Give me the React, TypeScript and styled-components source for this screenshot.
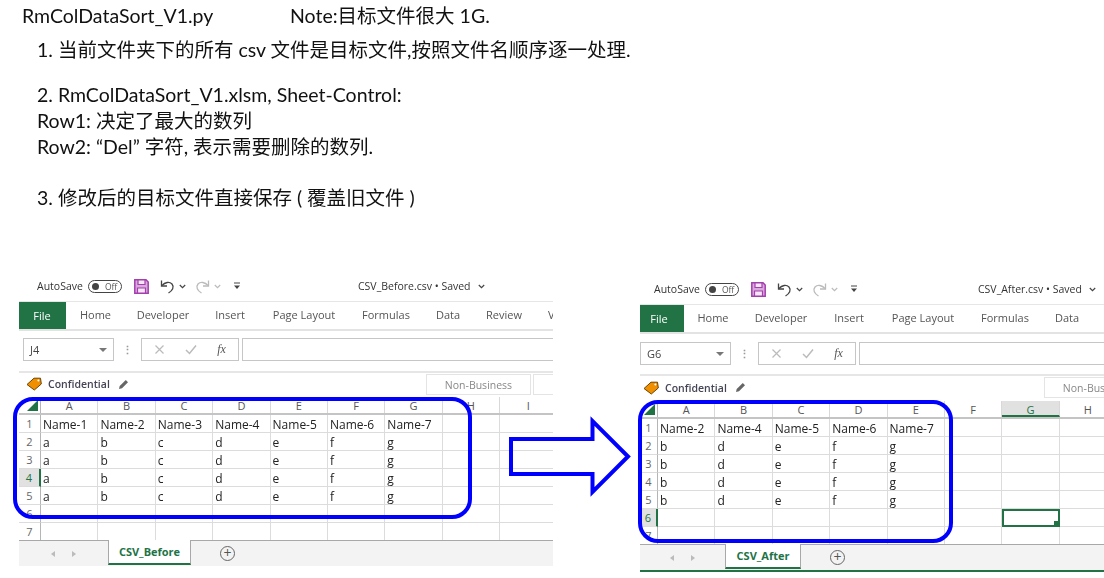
import styled, { createGlobalStyle } from 'styled-components';

const GlobalStyle = createGlobalStyle`
  html, body {
    margin: 0;
    padding: 0;
    background: #fff;
    overflow: hidden;
  }
`;

const GREEN = '#217346';
const BLUE = '#0000ff';
const ROW_H = 18;
const COL_W = 57.4;

const Page = styled.div`
  position: relative;
  width: 1104px;
  height: 578px;
  overflow: hidden;
  background: #fff;
  color: #1a1a1a;
`;

const Notes = styled.div`
  height: 278px;
  padding: 5px 0 0 22px;
  box-sizing: border-box;
  font-family: Lato, 'Noto Sans CJK SC', sans-serif;
  font-size: 19.5px;
  color: #111;
  filter: blur(0.3px);
`;

const TitleRow = styled.div`
  display: flex;
  height: 22px;
  line-height: 22px;
`;

const TitleFile = styled.span`
  width: 268px;
`;

const NoteList = styled.div`
  padding: 10px 0 0 15px;
`;

const NoteBlock = styled.div<{ $gap: number }>`
  margin-bottom: ${(p) => p.$gap}px;
  line-height: 26px;
`;

const Windows = styled.div`
  display: flex;
  align-items: flex-start;
  padding-left: 19px;
  gap: 87px;
`;

const Sheet = styled.div<{ $width: number; $top: number }>`
  width: ${(p) => p.$width}px;
  margin-top: ${(p) => p.$top}px;
  flex: none;
  font-family: 'Open Sans', 'Noto Sans', sans-serif;
  font-size: 11px;
  color: #444;
  filter: blur(0.3px);
`;

const QuickBar = styled.div<{ $pad: number }>`
  height: 24px;
  display: flex;
  align-items: center;
  padding: 0 0 7px ${(p) => p.$pad}px;
  font-size: 10.5px;
  border-bottom: 1px solid #e6e6e6;
  box-sizing: border-box;
  white-space: nowrap;
`;

const QuickLabel = styled.span`
  width: 51px;
  flex: none;
  color: #333;
`;

const Toggle = styled.span`
  width: 34px;
  height: 13px;
  border: 1px solid #444;
  border-radius: 8px;
  display: flex;
  align-items: center;
  padding-left: 3px;
  gap: 6px;
  font-size: 8.5px;
  color: #555;
  flex: none;
  box-sizing: border-box;
  &::before {
    content: '';
    width: 7px;
    height: 7px;
    border-radius: 50%;
    background: #444;
  }
`;

const IconSlot = styled.span<{ $left: number }>`
  display: flex;
  flex: none;
  margin-left: ${(p) => p.$left}px;
`;

const DocTitle = styled.span<{ $left: number }>`
  margin-left: ${(p) => p.$left}px;
  white-space: nowrap;
  font-size: 10.5px;
  color: #333;
  display: flex;
  align-items: center;
  gap: 7px;
`;

const TabsBar = styled.div`
  height: 27px;
  display: flex;
  align-items: center;
  overflow: hidden;
  border-bottom: 2px solid #e3e3e3;
  box-sizing: content-box;
  font-size: 11px;
`;

const FileTab = styled.span<{ $width: number; $inset: number }>`
  width: ${(p) => p.$width}px;
  height: 27px;
  padding-right: ${(p) => p.$inset}px;
  box-sizing: border-box;
  background: ${GREEN};
  color: #fff;
  display: flex;
  align-items: center;
  justify-content: center;
  flex: none;
`;

const RibbonTab = styled.span<{ $width: number }>`
  width: ${(p) => p.$width}px;
  flex: none;
  margin-bottom: 2px;
  text-align: center;
  color: #555;
  white-space: nowrap;
`;

const FormulaBar = styled.div<{ $pad: number; $lift: number }>`
  height: 42px;
  display: flex;
  align-items: center;
  padding: 0 0 ${(p) => p.$lift}px ${(p) => p.$pad}px;
  border-bottom: 2px solid #e6e6e6;
  box-sizing: border-box;
`;

const NameBox = styled.div`
  width: 91px;
  height: 23px;
  border: 1px solid #c6c6c6;
  box-sizing: border-box;
  display: flex;
  align-items: center;
  justify-content: space-between;
  padding: 0 6px;
  font-size: 11px;
  color: #444;
  flex: none;
`;

const Caret = styled.span`
  width: 0;
  height: 0;
  border-left: 4px solid transparent;
  border-right: 4px solid transparent;
  border-top: 4px solid #777;
`;

const Dots = styled.span`
  width: 27px;
  flex: none;
  text-align: center;
  color: #999;
  font-size: 11px;
  font-weight: 700;
`;

const FormulaTools = styled.div`
  width: 98px;
  height: 23px;
  border: 1px solid #c6c6c6;
  box-sizing: border-box;
  display: flex;
  align-items: center;
  justify-content: space-around;
  padding: 0 2px;
  flex: none;
  color: #bbb;
`;

const FxLabel = styled.span`
  font-family: 'Liberation Serif', serif;
  font-style: italic;
  font-size: 12px;
  color: #555;
`;

const FormulaInput = styled.div`
  flex: 1;
  height: 23px;
  margin-left: 3px;
  border: 1px solid #c6c6c6;
  border-right: 0;
  box-sizing: border-box;
`;

const LabelRow = styled.div<{ $height: number; $pad: number }>`
  height: ${(p) => p.$height}px;
  display: flex;
  align-items: center;
  padding: 0 0 2px ${(p) => p.$pad}px;
  box-sizing: border-box;
  position: relative;
  overflow: hidden;
`;

const LabelText = styled.span`
  font-weight: 600;
  font-size: 10.5px;
  color: #445;
  margin-left: 6px;
  margin-right: 8px;
`;

const SensitivityTab = styled.span<{ $left: number; $width: number }>`
  position: absolute;
  left: ${(p) => p.$left}px;
  top: 1px;
  width: ${(p) => p.$width}px;
  height: 21px;
  border: 1px solid #e4e4e4;
  box-sizing: border-box;
  display: flex;
  align-items: center;
  justify-content: center;
  font-size: 10.5px;
  color: #888;
  white-space: nowrap;
`;

const GridArea = styled.div`
  position: relative;
`;

const GridRow = styled.div`
  display: flex;
  height: ${ROW_H}px;
  overflow: hidden;
`;

const HeaderRow = styled(GridRow)`
  border-bottom: 2px solid #c4c4c4;
  box-sizing: border-box;
`;

const RowHead = styled.div<{ $active?: boolean; $width: number }>`
  width: ${(p) => p.$width}px;
  flex: none;
  box-sizing: border-box;
  display: flex;
  align-items: center;
  justify-content: center;
  font-size: 11px;
  color: ${(p) => (p.$active ? GREEN : '#666')};
  background: ${(p) => (p.$active ? '#e1e1e1' : '#fff')};
  border-right: ${(p) => (p.$active ? `2px solid ${GREEN}` : '1px solid #b5b5b5')};
  border-bottom: 1px solid #dcdcdc;
`;

const Corner = styled.div<{ $width: number }>`
  width: ${(p) => p.$width}px;
  flex: none;
  box-sizing: border-box;
  border-right: 1px solid #b5b5b5;
  position: relative;
  &::after {
    content: '';
    position: absolute;
    right: 2px;
    bottom: 2px;
    border-style: solid;
    border-width: 0 0 11px 11px;
    border-color: transparent transparent ${GREEN} transparent;
  }
`;

const ColHead = styled.div<{ $active?: boolean }>`
  width: ${COL_W}px;
  flex: none;
  box-sizing: border-box;
  text-align: center;
  line-height: 18px;
  font-size: 11px;
  color: ${(p) => (p.$active ? GREEN : '#555')};
  background: ${(p) => (p.$active ? '#e1e1e1' : '#fff')};
  border-right: 1px solid #d8d8d8;
  border-bottom: ${(p) => (p.$active ? `2px solid ${GREEN}` : 'none')};
`;

const Cell = styled.div<{ $selected?: boolean }>`
  width: ${COL_W}px;
  flex: none;
  box-sizing: border-box;
  padding-left: 2px;
  line-height: 20px;
  font-size: 12px;
  color: #222;
  white-space: nowrap;
  border-right: 1px solid #dcdcdc;
  border-bottom: 1px solid #dcdcdc;
  position: relative;
  ${(p) => p.$selected && `outline: 2px solid ${GREEN}; outline-offset: -2px;`}
`;

const Handle = styled.span`
  position: absolute;
  right: 0;
  bottom: 0;
  width: 5px;
  height: 5px;
  background: ${GREEN};
`;

const SheetBar = styled.div`
  height: 25px;
  margin-top: -1px;
  display: flex;
  background: #f3f3f3;
  border-top: 1px solid #a8a8a8;
  box-sizing: content-box;
  position: relative;
`;

const Arrows = styled.span<{ $width: number }>`
  width: ${(p) => p.$width}px;
  flex: none;
  display: flex;
  align-items: center;
  justify-content: center;
  gap: 17px;
  &::before,
  &::after {
    content: '';
    border-style: solid;
    border-width: 3px 4px;
    border-color: transparent #bbb transparent transparent;
    margin-left: -4px;
  }
  &::after {
    border-color: transparent transparent transparent #bbb;
    margin-left: 0;
    margin-right: -4px;
  }
`;

const SheetTab = styled.span<{ $width: number }>`
  width: ${(p) => p.$width}px;
  height: 25px;
  margin-top: -1px;
  flex: none;
  background: #fff;
  border-left: 1px solid #a8a8a8;
  border-right: 1px solid #a8a8a8;
  border-bottom: 2px solid ${GREEN};
  box-sizing: border-box;
  text-align: center;
  line-height: 24px;
  font-weight: 700;
  font-size: 11px;
  color: ${GREEN};
`;

const AddSheet = styled.span`
  width: 15px;
  height: 15px;
  margin: 5px 0 0 29px;
  flex: none;
  border: 1px solid #666;
  border-radius: 50%;
  box-sizing: border-box;
  color: #555;
  font-size: 14px;
  line-height: 12px;
  text-align: center;
`;

const StatusLine = styled.div`
  height: 2px;
  background: ${GREEN};
`;

const BlueFrame = styled.div<{ $left: number; $top: number; $width: number; $height: number }>`
  position: absolute;
  left: ${(p) => p.$left}px;
  top: ${(p) => p.$top}px;
  width: ${(p) => p.$width}px;
  height: ${(p) => p.$height}px;
  border: 4px solid ${BLUE};
  border-radius: 20px;
  box-sizing: border-box;
  pointer-events: none;
`;

const ArrowOverlay = styled.svg`
  position: absolute;
  left: 500px;
  top: 405px;
`;

function SaveIcon() {
  return (
    <svg width="15" height="15" viewBox="0 0 15 15" fill="none">
      <path d="M.8.8h11.2l2.2 2.2v11.2H.8z" fill="#d9a8dd" stroke="#a43fae" strokeWidth="1.5" />
      <path d="M4 1h7v4.5H4zM3.5 9h8v5h-8z" fill="#f4e6f5" stroke="#a43fae" strokeWidth="1.2" />
    </svg>
  );
}

function UndoIcon({ color, flip }: { color: string; flip?: boolean }) {
  return (
    <svg width="15" height="15" viewBox="0 0 15 15" fill="none" style={flip ? { transform: 'scaleX(-1)' } : undefined}>
      <path d="M1.5 1.5v5.5h5.5" stroke={color} strokeWidth="1.3" />
      <path d="M2 6.5C5 3 9.5 2.5 12 5c2.5 3 .5 6.5-3.5 9" stroke={color} strokeWidth="1.3" />
    </svg>
  );
}

function Chevron({ color = '#444' }: { color?: string }) {
  return (
    <svg width="7" height="5" viewBox="0 0 7 5" fill="none">
      <path d="M.8 1l2.7 2.7L6.2 1" stroke={color} strokeWidth="1.2" />
    </svg>
  );
}

function CustomizeIcon() {
  return (
    <svg width="8" height="8" viewBox="0 0 8 8" fill="none">
      <path d="M1 1h6" stroke="#444" />
      <path d="M1 3.5l3 3.5 3-3.5z" fill="#444" />
    </svg>
  );
}

function LabelIcon() {
  return (
    <svg width="16" height="14" viewBox="0 0 16 14">
      <path d="M1 7.5L8 1.2h6.5l.8 5.8-7 6z" fill="#f09000" stroke="#6b4300" strokeWidth="1" />
      <circle cx="12.4" cy="3.6" r="1" fill="#fff" />
    </svg>
  );
}

function PencilIcon() {
  return (
    <svg width="11" height="11" viewBox="0 0 11 11">
      <path d="M1 10l.7-3L7.8 1l2.2 2.2L4 9.3z" fill="#666" />
    </svg>
  );
}

function CrossIcon() {
  return (
    <svg width="11" height="11" viewBox="0 0 11 11" fill="none">
      <path d="M1.5 1.5l8 8M9.5 1.5l-8 8" stroke="#bbb" strokeWidth="1.2" />
    </svg>
  );
}

function CheckIcon() {
  return (
    <svg width="12" height="11" viewBox="0 0 12 11" fill="none">
      <path d="M1 6l3.5 3.5L11 1.5" stroke="#bbb" strokeWidth="1.5" />
    </svg>
  );
}

type Book = {
  width: number;
  top: number;
  rowHead: number;
  quickPad: number;
  barPad: number;
  barLift: number;
  labelPad: number;
  labelHeight: number;
  fileWidth: number;
  fileInset: number;
  titleLeft: number;
  fileName: string;
  cellRef: string;
  tabs: [string, number][];
  columns: string[];
  rows: string[][];
  activeRow: number;
  activeCol?: string;
  selected?: [number, number];
  tabName: string;
  tabWidth: number;
  arrowsWidth: number;
  nonBusinessLeft: number;
  frame: { left: number; top: number; width: number; height: number };
  status?: boolean;
};

const beforeNames = ['Name-1', 'Name-2', 'Name-3', 'Name-4', 'Name-5', 'Name-6', 'Name-7'];
const afterNames = ['Name-2', 'Name-4', 'Name-5', 'Name-6', 'Name-7'];
const repeat = (row: string[]) => [row, row, row, row];

const before: Book = {
  width: 534,
  top: 0,
  rowHead: 22,
  quickPad: 18,
  barPad: 4,
  barLift: 3,
  labelPad: 7,
  labelHeight: 24,
  fileWidth: 47,
  fileInset: 1,
  titleLeft: 117,
  fileName: 'CSV_Before.csv',
  cellRef: 'J4',
  tabs: [['Home', 59], ['Developer', 76], ['Insert', 58], ['Page Layout', 90], ['Formulas', 74], ['Data', 50], ['Review', 62], ['View', 50]],
  columns: ['A', 'B', 'C', 'D', 'E', 'F', 'G', 'H', 'I'],
  rows: [beforeNames, ...repeat(['a', 'b', 'c', 'd', 'e', 'f', 'g'])],
  activeRow: 4,
  tabName: 'CSV_Before',
  tabWidth: 83,
  arrowsWidth: 89,
  nonBusinessLeft: 407,
  frame: { left: -6, top: 0, width: 459, height: 122 },
};

const after: Book = {
  width: 464,
  top: 3,
  rowHead: 18,
  quickPad: 14,
  barPad: 0,
  barLift: 1,
  labelPad: 3,
  labelHeight: 25,
  fileWidth: 44,
  fileInset: 6,
  titleLeft: 120,
  fileName: 'CSV_After.csv',
  cellRef: 'G6',
  tabs: [['Home', 58], ['Developer', 78], ['Insert', 58], ['Page Layout', 90], ['Formulas', 74], ['Data', 50]],
  columns: ['A', 'B', 'C', 'D', 'E', 'F', 'G', 'H'],
  rows: [afterNames, ...repeat(['b', 'd', 'e', 'f', 'g'])],
  activeRow: 6,
  activeCol: 'G',
  selected: [6, 6],
  tabName: 'CSV_After',
  tabWidth: 76,
  arrowsWidth: 85,
  nonBusinessLeft: 404,
  frame: { left: -2, top: -1, width: 315, height: 143 },
  status: true,
};

function Workbook({ book }: { book: Book }) {
  const rowCount = 7;
  const colCount = book.columns.length;
  return (
    <Sheet $width={book.width} $top={book.top}>
      <QuickBar $pad={book.quickPad}>
        <QuickLabel>AutoSave</QuickLabel>
        <Toggle>Off</Toggle>
        <IconSlot $left={12}><SaveIcon /></IconSlot>
        <IconSlot $left={11}><UndoIcon color="#444" /></IconSlot>
        <IconSlot $left={4}><Chevron /></IconSlot>
        <IconSlot $left={9}><UndoIcon color="#bbb" flip /></IconSlot>
        <IconSlot $left={4}><Chevron color="#bbb" /></IconSlot>
        <IconSlot $left={12}><CustomizeIcon /></IconSlot>
        <DocTitle $left={book.titleLeft}>
          {book.fileName} • Saved <Chevron />
        </DocTitle>
      </QuickBar>
      <TabsBar>
        <FileTab $width={book.fileWidth} $inset={book.fileInset}>File</FileTab>
        {book.tabs.map(([name, width]) => (
          <RibbonTab key={name} $width={width}>{name}</RibbonTab>
        ))}
      </TabsBar>
      <FormulaBar $pad={book.barPad} $lift={book.barLift}>
        <NameBox>
          {book.cellRef}
          <Caret />
        </NameBox>
        <Dots>⋮</Dots>
        <FormulaTools>
          <CrossIcon />
          <CheckIcon />
          <FxLabel>fx</FxLabel>
        </FormulaTools>
        <FormulaInput />
      </FormulaBar>
      <LabelRow $height={book.labelHeight} $pad={book.labelPad}>
        <LabelIcon />
        <LabelText>Confidential</LabelText>
        <PencilIcon />
        <SensitivityTab $left={book.nonBusinessLeft} $width={105}>Non-Business</SensitivityTab>
        <SensitivityTab $left={book.nonBusinessLeft + 107} $width={60} />
      </LabelRow>
      <GridArea>
        <HeaderRow>
          <Corner $width={book.rowHead} />
          {book.columns.map((col) => (
            <ColHead key={col} $active={col === book.activeCol}>{col}</ColHead>
          ))}
        </HeaderRow>
        {Array.from({ length: rowCount }, (_, r) => (
          <GridRow key={r}>
            <RowHead $width={book.rowHead} $active={r + 1 === book.activeRow}>{r + 1}</RowHead>
            {Array.from({ length: colCount }, (_, c) => {
              const selected = book.selected?.[0] === r + 1 && book.selected?.[1] === c;
              return (
                <Cell key={c} $selected={selected}>
                  {book.rows[r]?.[c] ?? ''}
                  {selected && <Handle />}
                </Cell>
              );
            })}
          </GridRow>
        ))}
        <BlueFrame $left={book.frame.left} $top={book.frame.top} $width={book.frame.width} $height={book.frame.height} />
      </GridArea>
      <SheetBar>
        <Arrows $width={book.arrowsWidth} />
        <SheetTab $width={book.tabWidth}>{book.tabName}</SheetTab>
        <AddSheet>+</AddSheet>
      </SheetBar>
      {book.status && <StatusLine />}
    </Sheet>
  );
}

export default function App() {
  return (
    <Page>
      <GlobalStyle />
      <Notes>
        <TitleRow>
          <TitleFile>RmColDataSort_V1.py</TitleFile>
          <span>Note:目标文件很大 1G.</span>
        </TitleRow>
        <NoteList>
          <NoteBlock $gap={19}>1. 当前文件夹下的所有 csv 文件是目标文件,按照文件名顺序逐一处理.</NoteBlock>
          <NoteBlock $gap={25}>
            2. RmColDataSort_V1.xlsm, Sheet-Control:
            <br />
            Row1: 决定了最大的数列
            <br />
            Row2: “Del” 字符, 表示需要删除的数列.
          </NoteBlock>
          <NoteBlock $gap={0}>3. 修改后的目标文件直接保存 ( 覆盖旧文件 )</NoteBlock>
        </NoteList>
      </Notes>
      <Windows>
        <Workbook book={before} />
        <Workbook book={after} />
      </Windows>
      <ArrowOverlay width="140" height="100" viewBox="0 0 140 100">
        <path d="M11 34H92.5V16L128 51.5 92.5 87V69H11Z" fill="none" stroke={BLUE} strokeWidth="4" />
      </ArrowOverlay>
    </Page>
  );
}
